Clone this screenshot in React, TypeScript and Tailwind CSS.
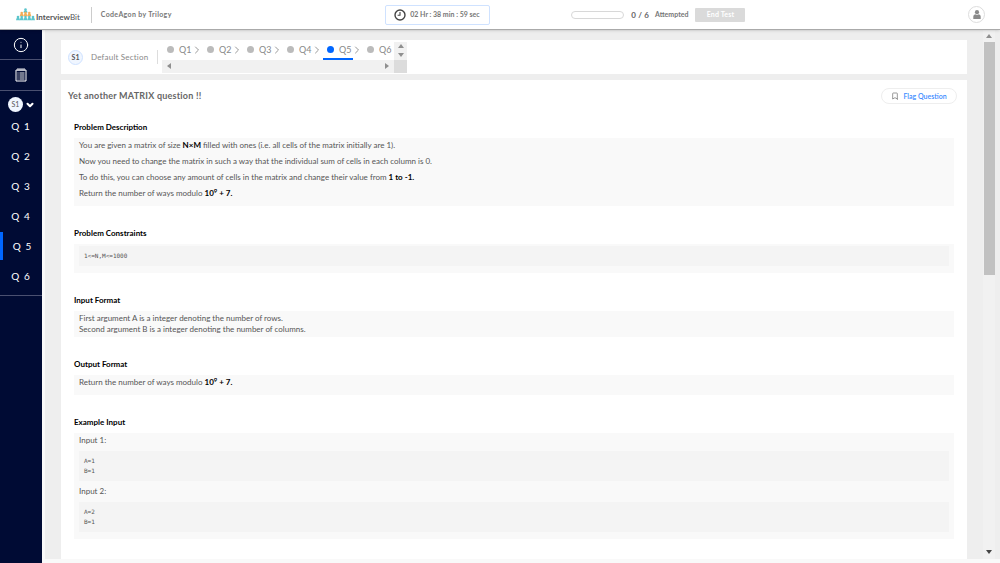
import React from "react";
import { ChevronDown, ChevronRight, Bookmark, Info } from "lucide-react";

const questions = [1, 2, 3, 4, 5, 6];
const activeQuestion = 5;

const Arrow = ({ points, className }: { points: string; className?: string }) => (
  <svg viewBox="0 0 6 6" className={`size-[6px] ${className ?? "fill-[#8f8f8f]"}`}>
    <polygon points={points} />
  </svg>
);

const UP = "0,5 3,1 6,5";
const DOWN = "0,1 3,5 6,1";
const LEFT = "5,0 1,3 5,6";
const RIGHT = "1,0 5,3 1,6";

const TEAL = "#5cc5cc";
const ORANGE = "#f4ad57";

const people = [
  { x: 9.5, y: 0.5, color: TEAL },
  { x: 5.7, y: 4, color: ORANGE },
  { x: 9.5, y: 4, color: ORANGE },
  { x: 13.3, y: 4, color: ORANGE },
  { x: 2, y: 8, color: TEAL },
  { x: 5.7, y: 8, color: TEAL },
  { x: 9.5, y: 8, color: TEAL },
  { x: 13.3, y: 8, color: TEAL },
  { x: 17, y: 8, color: TEAL },
];

const Logo = () => (
  <a href="#" className="flex items-center gap-px">
    <svg viewBox="0 0 19 13" className="h-[13px] w-[19px]">
      {people.map(({ x, y, color }, i) => (
        <g key={i} fill={color}>
          <circle cx={x} cy={y + 1.1} r="1.3" />
          <path d={`M${x - 2} ${y + 4.2}q0-2.4 2-2.4t2 2.4z`} />
        </g>
      ))}
    </svg>
    <span className="pt-1 text-[8px] leading-[10px] font-bold text-[#555]">
      Interview<span className="font-normal">Bit</span>
    </span>
  </a>
);

const Header = () => (
  <header className="z-10 flex h-[30px] shrink-0 items-center border-b border-[#aaa] bg-white pr-[15px] pl-4 shadow-sm">
    <Logo />
    <div className="mr-[9px] ml-[11px] h-4 w-px bg-[#ccc]" />
    <span className="w-[72px] text-[7px] font-bold tracking-wider whitespace-nowrap text-[#777]">CodeAgon by Trilogy</span>
    <div className="grow-[21]" />
    <div className="flex h-5 w-[105px] items-center gap-1 rounded-xs border border-[#cfe2ff] pl-2">
      <svg viewBox="0 0 12 12" className="size-3 shrink-0 fill-none stroke-[#444]">
        <circle cx="6" cy="6" r="5" strokeWidth="1.4" />
        <path d="M6 3v3.2H3.6" strokeWidth="1.1" />
      </svg>
      <span className="text-[7px] font-bold whitespace-nowrap text-[#777]">02 Hr : 38 min : 59 sec</span>
    </div>
    <div className="grow-[8]" />
    <div className="h-2 w-[53px] rounded-full border border-[#d8d8d8]" />
    <span className="ml-[7px] text-[8px] font-bold tracking-wide text-[#666]">0 / 6</span>
    <span className="ml-[6px] text-[7px] font-bold text-[#777]">Attempted</span>
    <button className="ml-[7px] h-[14px] w-[50px] rounded-[1px] bg-[#dadada] text-[7px] font-bold tracking-wide text-white">
      End Test
    </button>
    <div className="grow-[22]" />
    <button aria-label="Profile" className="flex size-[17px] items-center justify-center rounded-full border border-[#ddd]">
      <svg viewBox="0 0 8 9" className="h-[9px] w-2 fill-[#8a8a8a]">
        <circle cx="4" cy="2.2" r="2.1" />
        <path d="M0.3 9V6.5Q0.3 4.5 2.3 4.3Q4 5.3 5.7 4.3Q7.7 4.5 7.7 6.5V9z" />
      </svg>
    </button>
  </header>
);

const Sidebar = () => (
  <nav className="w-[42px] shrink-0 bg-[#000b34] text-white">
    <a href="#" aria-label="Information" className="flex h-[30px] items-center justify-center border-b border-[#4a5070]">
      <Info className="size-4" strokeWidth={1.5} />
    </a>
    <a href="#" aria-label="Question list" className="flex h-[31px] items-center justify-center border-b border-[#4a5070]">
      <svg viewBox="0 0 12 14" className="h-[14px] w-3 fill-none stroke-white">
        <path d="M1 2h10v11H1z" />
        <path d="M3 0v3M5 0v3M7 0v3M9 0v3" strokeWidth="0.9" />
        <path d="M2.5 5h1M4.5 5h5M2.5 7h1M4.5 7h5M2.5 9h1M4.5 9h5M2.5 11h1M4.5 11h5" strokeWidth="0.9" />
      </svg>
    </a>
    <div className="border-b border-[#4a5070] pt-[6px] pb-[3px]">
      <button className="flex w-full items-center gap-[2px] pl-2">
        <span className="flex size-[15px] items-center justify-center rounded-full bg-[#f0f6ff] text-[7px] text-[#555]">
          S1
        </span>
        <ChevronDown className="size-[10px]" strokeWidth={5} />
      </button>
      {questions.map((q) => (
        <a
          key={q}
          href="#"
          className={`mb-[2px] flex h-7 items-center justify-center text-[10px] tracking-widest ${
            q === activeQuestion ? "border-l-[3px] border-[#0066ff]" : ""
          }`}
        >
          Q {q}
        </a>
      ))}
    </div>
  </nav>
);

const SectionBar = () => (
  <div className="flex h-[34px] shrink-0 items-center bg-white pl-[7px]">
    <span className="flex size-[15px] items-center justify-center rounded-full border border-[#cfe2ff] bg-[#f0f6ff] text-[7px] font-bold text-[#555]">
      S1
    </span>
    <span className="ml-2 w-[58px] text-[8px] tracking-wide whitespace-nowrap text-[#888]">Default Section</span>
    <div className="mr-1 ml-2 h-[14px] w-px bg-[#ddd]" />
    <div className="grid grid-cols-[232px_13px] grid-rows-[18px_13px]">
      <div className="flex items-start gap-[10px] overflow-hidden pl-px">
        {questions.map((q) => (
          <a
            key={q}
            href="#"
            className={`flex h-[18px] w-[30px] shrink-0 items-center border-b-2 pl-[4px] text-[9px] text-[#888] ${
              q === activeQuestion ? "border-[#0066ff]" : "border-transparent"
            }`}
          >
            <span
              className={`mr-[5px] size-[7px] shrink-0 rounded-full ${q === activeQuestion ? "bg-[#0066ff]" : "bg-[#bbb]"}`}
            />
            Q{q}
            <ChevronRight className="size-3 shrink-0 text-[#999]" />
          </a>
        ))}
      </div>
      <div className="flex flex-col items-center justify-around bg-[#f1f1f1]">
        <Arrow points={UP} />
        <Arrow points={DOWN} />
      </div>
      <div className="flex items-center justify-between bg-[#f1f1f1] px-1">
        <Arrow points={LEFT} />
        <Arrow points={RIGHT} />
      </div>
      <div className="bg-[#dcdcdc]" />
    </div>
  </div>
);

const Section = ({ title, children }: { title: string; children: React.ReactNode }) => (
  <section className="mb-5">
    <h2 className="mb-1 text-[8px] leading-[14px] font-bold text-black">{title}</h2>
    <div className="bg-[#f9f9f9] px-[5px] py-[2px] text-[8px] leading-[11px] text-[#555]">{children}</div>
  </section>
);

const Para = ({ children }: { children: React.ReactNode }) => <p className="mb-[5px]">{children}</p>;

const Bold = ({ children }: { children: React.ReactNode }) => <b className="font-bold text-black">{children}</b>;

const Code = ({ children }: { children: string }) => (
  <pre className="mb-[5px] bg-[#f4f4f4] p-[5px] font-['DejaVu_Sans_Mono',monospace] text-[6px] leading-[10px] text-[#555]">
    {children}
  </pre>
);

const Modulo = () => (
  <Para>
    Return the number of ways modulo{" "}
    <Bold>
      10<sup className="text-[6px]">9</sup> + 7.
    </Bold>
  </Para>
);

const Problem = () => (
  <article className="mt-[6px] flex-1 overflow-hidden bg-white">
    <div className="flex items-center justify-between pt-2 pr-[10px] pl-[7px]">
      <h1 className="text-[9px] font-bold tracking-wide text-[#666]">Yet another MATRIX question !!</h1>
      <button className="flex h-4 w-[76px] items-center justify-center gap-1 rounded-full border border-[#eee] text-[7px] font-semibold text-[#3b8bff]">
        <Bookmark className="size-2 text-[#666]" />
        Flag Question
      </button>
    </div>
    <div className="px-[13px] pt-4">
      <Section title="Problem Description">
        <Para>
          You are given a matrix of size <Bold>N×M</Bold> filled with ones (i.e. all cells of the matrix initially are 1).
        </Para>
        <Para>
          Now you need to change the matrix in such a way that the individual sum of cells in each column is 0.
        </Para>
        <Para>
          To do this, you can choose any amount of cells in the matrix and change their value from <Bold>1 to -1.</Bold>
        </Para>
        <Modulo />
      </Section>
      <Section title="Problem Constraints">
        <Code>{"1<=N,M<=1000"}</Code>
      </Section>
      <Section title="Input Format">
        First argument A is a integer denoting the number of rows.
        <br />
        Second argument B is a integer denoting the number of columns.
      </Section>
      <Section title="Output Format">
        <Modulo />
      </Section>
      <Section title="Example Input">
        <Para>Input 1:</Para>
        <Code>{"A=1\nB=1"}</Code>
        <Para>Input 2:</Para>
        <Code>{"A=2\nB=1"}</Code>
      </Section>
    </div>
  </article>
);

const Scrollbar = () => (
  <div className="flex w-3 shrink-0 flex-col items-center bg-[#f1f1f1]">
    <Arrow points={UP} className="my-[3px] fill-[#8f8f8f]" />
    <div className="h-[44%] w-[11px] bg-[#c1c1c1]" />
    <Arrow points={DOWN} className="mt-auto mb-1 fill-[#444]" />
  </div>
);

const App = () => (
  <div className="flex h-screen flex-col overflow-hidden bg-[#f9f9f9] font-['Lato',sans-serif]">
    <Header />
    <div className="flex min-h-0 flex-1">
      <Sidebar />
      <div className="mb-1 ml-[3px] flex min-w-0 flex-1 bg-[#eee] pr-[5px]">
        <main className="flex min-w-0 flex-1 flex-col px-4 pt-[10px]">
          <SectionBar />
          <Problem />
        </main>
        <Scrollbar />
      </div>
    </div>
  </div>
);

export default App;
